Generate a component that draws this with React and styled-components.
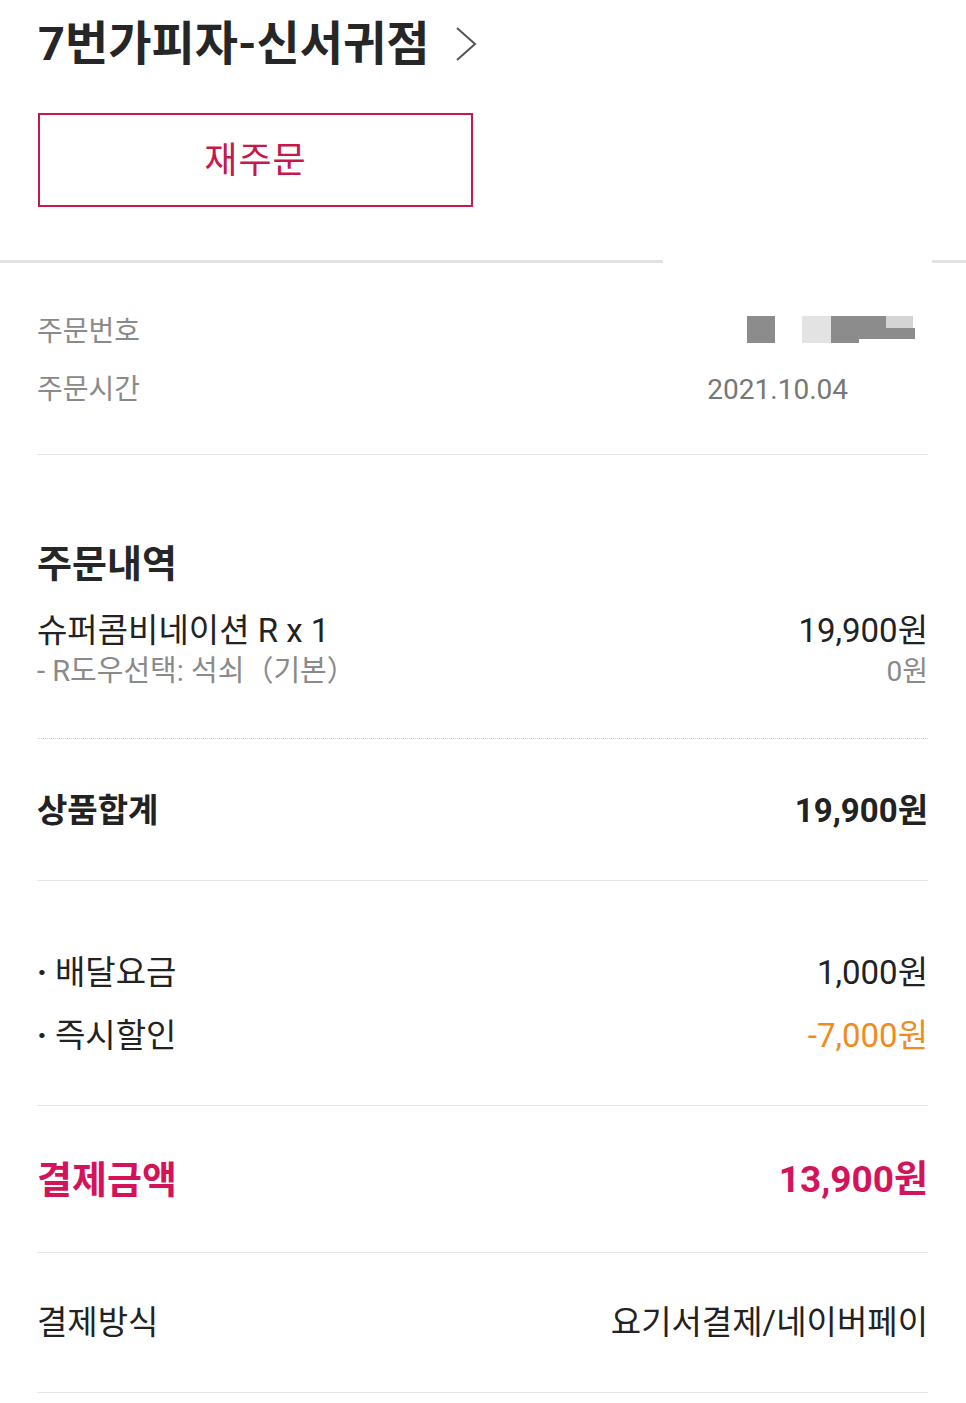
import React from 'react'
import styled, { createGlobalStyle } from 'styled-components'

const GlobalStyle = createGlobalStyle`
  html, body {
    margin: 0;
    padding: 0;
    background: #ffffff;
  }
  body {
    font-family: Roboto, "Noto Sans CJK KR", "Noto Sans", sans-serif;
    color: #222222;
  }
`

const Page = styled.main`
  width: 966px;
  min-height: 1403px;
  background: #fff;
`

const Header = styled.header`
  padding: 0 38px;
  height: 260px;
  display: flex;
  flex-direction: column;
`

const TitleRow = styled.div`
  height: 88px;
  display: flex;
  align-items: center;
  gap: 26px;
`

const StoreName = styled.h1`
  margin: 0;
  font-family: Roboto, "Noto Sans CJK KR", sans-serif;
  font-size: 47px;
  font-weight: 700;
  color: #262626;
  line-height: 88px;
`

const ReorderButton = styled.button`
  margin-top: 25px;
  width: 435px;
  height: 94px;
  border: 2px solid #c8174b;
  background: #fff;
  color: #c8174b;
  font-family: "Noto Sans CJK KR", sans-serif;
  font-size: 36px;
  font-weight: 400;
  letter-spacing: 1px;
  padding: 0 0 6px;
`

const ThickRule = styled.div`
  height: 3px;
  background: linear-gradient(
    to right,
    #e2e2e2 0,
    #e2e2e2 663px,
    #ffffff 663px,
    #ffffff 932px,
    #e2e2e2 932px
  );
`

const Section = styled.section`
  margin: 0 38px 0 37px;
  padding: ${p => p.$pad};
  border-bottom: ${p => (p.$dotted ? '1px dotted #cfcfcf' : '1px solid #e6e6e6')};
  display: flex;
  flex-direction: column;
  gap: ${p => p.$gap || '0px'};
`

const Row = styled.div`
  display: flex;
  justify-content: space-between;
  align-items: center;
  height: ${p => p.$h || '44px'};
  padding-top: 3px;
  box-sizing: border-box;
  font-size: ${p => p.$size || '32px'};
  font-weight: ${p => (p.$bold ? 700 : 400)};
  color: ${p => p.$color || '#222'};
  line-height: 1;
`

const Label = styled.span`
  font-family: Roboto, "Noto Sans CJK KR", sans-serif;
  font-size: ${p => p.$size || 'inherit'};
  display: flex;
  align-items: center;
`

const Bullet = styled.span`
  display: inline-block;
  width: 18px;
  font-family: Roboto, sans-serif;
  font-weight: 700;
`

const Value = styled.span`
  font-family: Roboto, "Noto Sans CJK KR", sans-serif;
  font-size: ${p => p.$size || 'inherit'};
  color: ${p => p.$color || 'inherit'};
  margin-right: ${p => p.$mr || '0px'};
`

const SectionTitle = styled.h2`
  margin: 0;
  font-family: "Noto Sans CJK KR", sans-serif;
  font-size: 38px;
  font-weight: 700;
  color: #262626;
  height: 50px;
  line-height: 50px;
`

const ItemBlock = styled.div`
  margin-top: 21px;
  display: flex;
  flex-direction: column;
`

const Chevron = () => (
  <svg width="22" height="36" viewBox="0 0 22 36">
    <polyline points="2,2 20,18 2,34" fill="none" stroke="#555" strokeWidth="2" />
  </svg>
)

const Masked = () => (
  <svg width="168" height="27" viewBox="0 0 168 27">
    <rect x="0" y="0" width="28" height="27" fill="#8c8c8c" />
    <rect x="55" y="0" width="29" height="27" fill="#e3e3e3" />
    <rect x="84" y="0" width="28" height="27" fill="#8c8c8c" />
    <rect x="112" y="0" width="27" height="23" fill="#8c8c8c" />
    <rect x="139" y="0" width="27" height="12" fill="#d4d4d4" />
    <rect x="139" y="12" width="29" height="11" fill="#8c8c8c" />
  </svg>
)

export default function App() {
  return (
    <Page>
      <GlobalStyle />
      <Header>
        <TitleRow>
          <StoreName>7번가피자-신서귀점</StoreName>
          <Chevron />
        </TitleRow>
        <ReorderButton>재주문</ReorderButton>
      </Header>
      <ThickRule />

      <Section $pad="38px 0 37px">
        <Row $h="58px" $size="28px" $color="#8a8a8a">
          <Label>주문번호</Label>
          <Value $mr="13px"><Masked /></Value>
        </Row>
        <Row $h="58px" $size="28px" $color="#8a8a8a">
          <Label>주문시간</Label>
          <Value $color="#777" $mr="80px">2021.10.04</Value>
        </Row>
      </Section>

      <Section $pad="81px 0 49px" $dotted>
        <SectionTitle>주문내역</SectionTitle>
        <ItemBlock>
          <Row $size="33px">
            <Label>슈퍼콤비네이션 R x 1</Label>
            <Value>19,900원</Value>
          </Row>
          <Row $h="38px" $size="28px" $color="#8a8a8a">
            <Label $size="29px">- R도우선택: 석쇠（기본）</Label>
            <Value>0원</Value>
          </Row>
        </ItemBlock>
      </Section>

      <Section $pad="48px 0 49px">
        <Row $bold $size="33px">
          <Label>상품합계</Label>
          <Value>19,900원</Value>
        </Row>
      </Section>

      <Section $pad="68px 0 49px" $gap="19px">
        <Row $size="33px">
          <Label><Bullet>·</Bullet>배달요금</Label>
          <Value>1,000원</Value>
        </Row>
        <Row $size="33px">
          <Label><Bullet>·</Bullet>즉시할인</Label>
          <Value $color="#f08c1e">-7,000원</Value>
        </Row>
      </Section>

      <Section $pad="50px 0 52px">
        <Row $bold $size="37px" $color="#d4145a">
          <Label $size="38px">결제금액</Label>
          <Value>13,900원</Value>
        </Row>
      </Section>

      <Section $pad="46px 0 49px">
        <Row $size="33px">
          <Label>결제방식</Label>
          <Value $size="33px">요기서결제/네이버페이</Value>
        </Row>
      </Section>
    </Page>
  )
}
